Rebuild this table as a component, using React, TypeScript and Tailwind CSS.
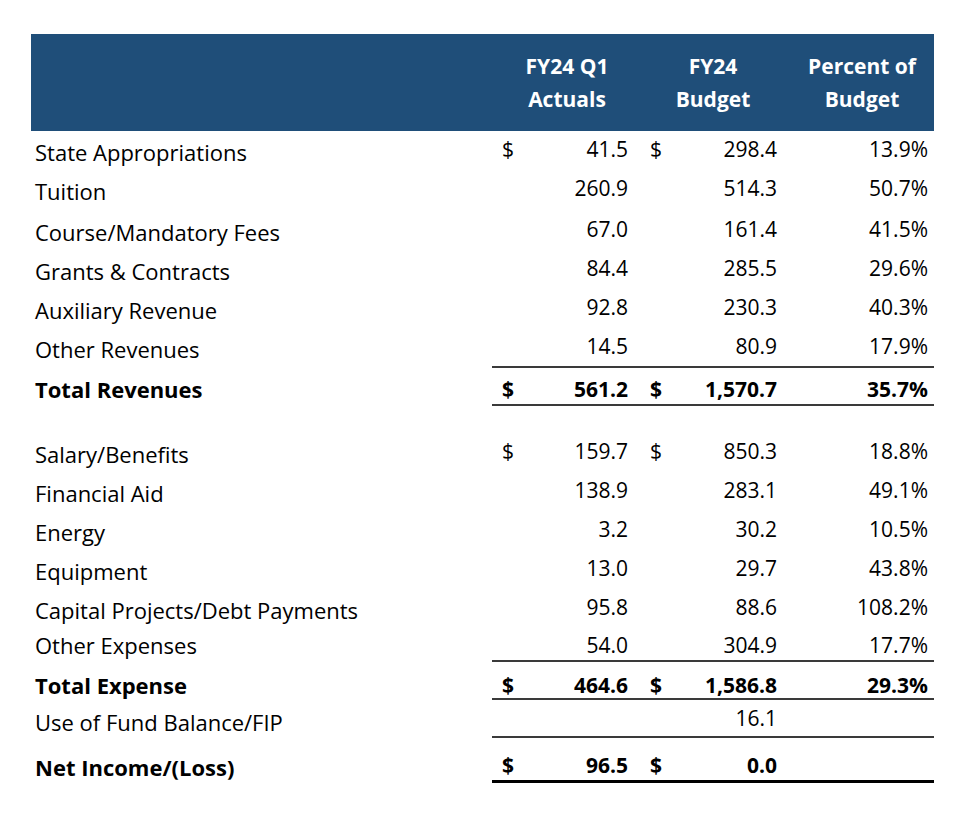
import clsx from 'clsx';

interface Line {
  label: string;
  actual?: string;
  budget?: string;
  pct?: string;
  dollars?: boolean;
  bold?: boolean;
  height: string;
  pad?: string;
  border?: string;
}

const ROWS: Line[] = [
  { label: 'State Appropriations', actual: '41.5', budget: '298.4', pct: '13.9%', dollars: true, height: 'h-[35px]' },
  { label: 'Tuition', actual: '260.9', budget: '514.3', pct: '50.7%', height: 'h-[43px]' },
  { label: 'Course/Mandatory Fees', actual: '67.0', budget: '161.4', pct: '41.5%', height: 'h-[39px]' },
  { label: 'Grants & Contracts', actual: '84.4', budget: '285.5', pct: '29.6%', height: 'h-[39px]' },
  { label: 'Auxiliary Revenue', actual: '92.8', budget: '230.3', pct: '40.3%', height: 'h-[39px]' },
  { label: 'Other Revenues', actual: '14.5', budget: '80.9', pct: '17.9%', height: 'h-[40px]' },
  {
    label: 'Total Revenues',
    actual: '561.2',
    budget: '1,570.7',
    pct: '35.7%',
    dollars: true,
    bold: true,
    height: 'h-[40px]',
    pad: 'pt-[6px]',
    border: 'border-y-2 border-[#3a3a3a]',
  },
  { label: '', height: 'h-[25px]' },
  { label: 'Salary/Benefits', actual: '159.7', budget: '850.3', pct: '18.8%', dollars: true, height: 'h-[39px]' },
  { label: 'Financial Aid', actual: '138.9', budget: '283.1', pct: '49.1%', height: 'h-[39px]' },
  { label: 'Energy', actual: '3.2', budget: '30.2', pct: '10.5%', height: 'h-[39px]' },
  { label: 'Equipment', actual: '13.0', budget: '29.7', pct: '43.8%', height: 'h-[39px]' },
  { label: 'Capital Projects/Debt Payments', actual: '95.8', budget: '88.6', pct: '108.2%', height: 'h-[39px]' },
  { label: 'Other Expenses', actual: '54.0', budget: '304.9', pct: '17.7%', height: 'h-[34px]', pad: 'pt-[4px]' },
  {
    label: 'Total Expense',
    actual: '464.6',
    budget: '1,586.8',
    pct: '29.3%',
    dollars: true,
    bold: true,
    height: 'h-[40px]',
    pad: 'pt-[9px]',
    border: 'border-y-2 border-[#3a3a3a]',
  },
  {
    label: 'Use of Fund Balance/FIP',
    budget: '16.1',
    height: 'h-[38px]',
    border: 'border-b-2 border-[#3a3a3a]',
  },
  {
    label: 'Net Income/(Loss)',
    actual: '96.5',
    budget: '0.0',
    dollars: true,
    bold: true,
    height: 'h-[45px]',
    pad: 'pt-[12px]',
    border: 'border-b-[3px] border-black',
  },
];

function Row({ row }: { row: Line }) {
  return (
    <div className={clsx('grid grid-cols-[461px_442px] leading-[26px]', row.height, row.bold && 'font-bold')}>
      <div className={clsx('flex items-center pl-[4px] text-[22px]', row.pad ?? 'pt-[6px]')}>{row.label}</div>
      <div className={clsx('grid grid-cols-[148px_150px_144px] text-[21px]', row.border, row.pad)}>
        <div className="flex items-center justify-between pl-[10px] pr-[12px]">
          <span>{row.dollars ? '$' : ''}</span>
          <span>{row.actual}</span>
        </div>
        <div className="flex items-center justify-between pl-[10px] pr-[13px]">
          <span>{row.dollars ? '$' : ''}</span>
          <span>{row.budget}</span>
        </div>
        <div className="flex items-center justify-end pr-[6px]">{row.pct}</div>
      </div>
    </div>
  );
}

export default function App() {
  return (
    <div className="min-h-[821px] w-[960px] bg-white pl-[31px] pt-[34px] font-['Open_Sans','Liberation_Sans',sans-serif] text-black">
      <div className="grid h-[97px] w-[903px] grid-cols-[461px_148px_150px_144px] bg-[#1f4e79] text-[21px] font-bold leading-[33px] text-white">
        <div />
        <div className="flex flex-col items-center justify-center pl-[2px]">
          <span>FY24 Q1</span>
          <span>Actuals</span>
        </div>
        <div className="flex flex-col items-center justify-center pr-[4px]">
          <span>FY24</span>
          <span>Budget</span>
        </div>
        <div className="flex flex-col items-center justify-center">
          <span>Percent of</span>
          <span>Budget</span>
        </div>
      </div>
      <div className="w-[903px]">
        {ROWS.map((row, i) => (
          <Row key={i} row={row} />
        ))}
      </div>
    </div>
  );
}
